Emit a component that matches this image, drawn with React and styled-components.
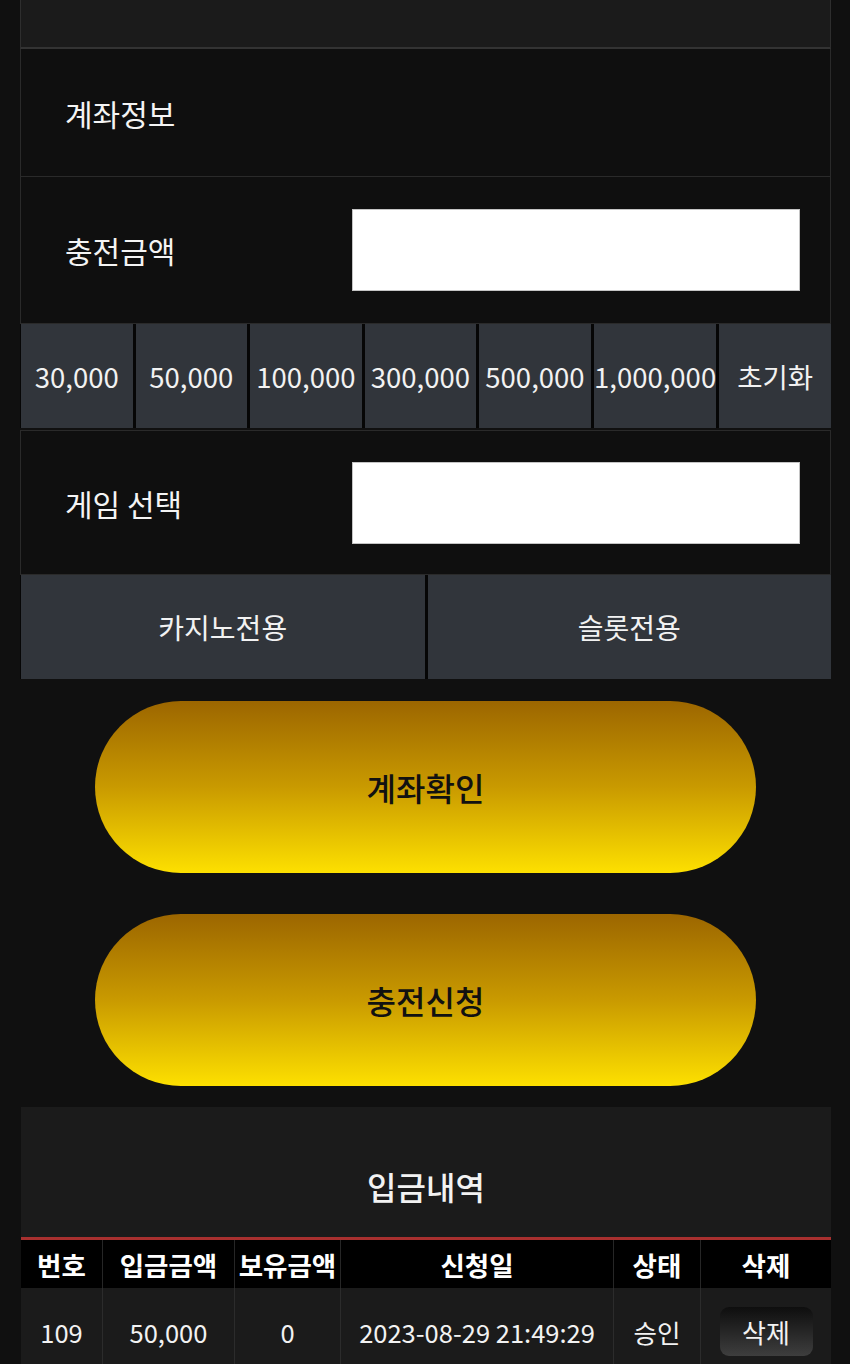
import React from 'react';
import styled, { createGlobalStyle } from 'styled-components';

const amounts = ['30,000', '50,000', '100,000', '300,000', '500,000', '1,000,000', '초기화'];

const history = [
  { no: 109, amount: '50,000', balance: '0', date: '2023-08-29 21:49:29', status: '승인' },
];

const App = () => {
  return (
    <>
      <GlobalStyle />
      <Page>
        <TopBar />
        <InfoRow $height={128}>
          <Label>계좌정보</Label>
        </InfoRow>
        <InfoRow $height={147}>
          <Label>충전금액</Label>
          <Field type='text' />
        </InfoRow>
        <AmountGrid>
          {amounts.map((a) => (
            <QuickButton key={a} $size={27.5}>
              {a}
            </QuickButton>
          ))}
        </AmountGrid>
        <InfoRow $height={145} $gapTop>
          <Label>게임 선택</Label>
          <Field type='text' />
        </InfoRow>
        <GameGrid>
          <QuickButton $size={28}>카지노전용</QuickButton>
          <QuickButton $size={28}>슬롯전용</QuickButton>
        </GameGrid>
        <Actions>
          <GoldButton>계좌확인</GoldButton>
          <GoldButton>충전신청</GoldButton>
        </Actions>
        <History>
          <HistoryTitle>입금내역</HistoryTitle>
          <HeadRow>
            <HeadCell>번호</HeadCell>
            <HeadCell>입금금액</HeadCell>
            <HeadCell>보유금액</HeadCell>
            <HeadCell>신청일</HeadCell>
            <HeadCell>상태</HeadCell>
            <HeadCell>삭제</HeadCell>
          </HeadRow>
          {history.map((h) => (
            <DataRow key={h.no}>
              <DataCell>{h.no}</DataCell>
              <DataCell>{h.amount}</DataCell>
              <DataCell>{h.balance}</DataCell>
              <DataCell>{h.date}</DataCell>
              <DataCell>{h.status}</DataCell>
              <DataCell>
                <DeleteButton>삭제</DeleteButton>
              </DataCell>
            </DataRow>
          ))}
        </History>
      </Page>
    </>
  );
};

export default App;

const GlobalStyle = createGlobalStyle`
  html, body {
    margin: 0;
    padding: 0;
    background: #101010;
  }
  body {
    font-family: "Noto Sans CJK KR", "Noto Sans", sans-serif;
    color: #f2f2f2;
  }
  * {
    box-sizing: border-box;
  }
`;

const Page = styled.div`
  margin: 0 19px 0 20px;
  display: flex;
  flex-direction: column;
  padding-bottom: 40px;
`;

const TopBar = styled.div`
  height: 49px;
  background: #1b1b1b;
  border-left: 1px solid #2e2e2e;
  border-right: 1px solid #2e2e2e;
  border-bottom: 2px solid #333;
`;

const InfoRow = styled.div`
  height: ${(p) => p.$height}px;
  margin-top: ${(p) => (p.$gapTop ? '2px' : '0')};
  background: #0f0f0f;
  border: 1px solid #2a2a2a;
  border-top: ${(p) => (p.$gapTop ? '1px solid #2a2a2a' : 'none')};
  display: flex;
  align-items: center;
  padding: 0 30px 0 44px;
`;

const Label = styled.div`
  width: 287px;
  font-size: 30px;
  line-height: 36px;
  color: #f4f4f4;
`;

const Field = styled.input`
  width: 448px;
  height: 82px;
  background: #fff;
  border: 1px solid #c4c4c4;
  outline: none;
  font-size: 24px;
  padding: 0 12px;
`;

const AmountGrid = styled.div`
  display: grid;
  grid-template-columns: 1fr 1fr 1fr 1fr 1fr 1.1fr 1fr;
  gap: 3px;
  height: 104px;
  padding-left: 1px;
  background: #060606;
`;

const GameGrid = styled.div`
  display: grid;
  grid-template-columns: 1fr 1fr;
  gap: 3px;
  height: 104px;
  padding-left: 1px;
  background: #060606;
`;

const QuickButton = styled.button`
  background: #31353b;
  border: none;
  color: #f2f2f2;
  font-family: inherit;
  font-size: ${(p) => p.$size}px;
  padding: 0;
  white-space: nowrap;
  overflow: visible;
  cursor: pointer;
`;

const Actions = styled.div`
  display: flex;
  flex-direction: column;
  align-items: center;
  gap: 41px;
  padding: 22px 0 21px;
`;

const GoldButton = styled.button`
  width: 661px;
  height: 172px;
  border: none;
  border-radius: 86px;
  background: linear-gradient(to bottom, #9c6600 0%, #c99a00 50%, #fde000 100%);
  color: #111;
  font-family: inherit;
  font-size: 32px;
  font-weight: 500;
  cursor: pointer;
`;

const History = styled.div`
  background: #1b1b1b;
  margin-left: 1px;
`;

const HistoryTitle = styled.div`
  text-align: center;
  font-size: 32px;
  line-height: 36px;
  font-weight: 500;
  padding: 61px 0 33px;
  border-bottom: 3px solid #a8302f;
`;

const columns = '82px 132px 106px 273px 87px 1fr';

const HeadRow = styled.div`
  display: grid;
  grid-template-columns: ${columns};
  background: #000;
  height: 48px;
`;

const HeadCell = styled.div`
  display: flex;
  align-items: center;
  justify-content: center;
  font-size: 26.5px;
  font-weight: 700;
  color: #fff;
  white-space: nowrap;
  border-right: 1px solid #262626;
  &:last-child {
    border-right: none;
  }
`;

const DataRow = styled.div`
  display: grid;
  grid-template-columns: ${columns};
  height: 90px;
  background: #1b1b1b;
`;

const DataCell = styled.div`
  display: flex;
  align-items: center;
  justify-content: center;
  padding-bottom: 2px;
  font-size: 25.5px;
  color: #f2f2f2;
  white-space: nowrap;
  border-right: 1px solid #2c2c2c;
  border-bottom: 1px solid #2c2c2c;
  &:last-child {
    border-right: none;
  }
`;

const DeleteButton = styled.button`
  width: 93px;
  height: 49px;
  border: none;
  border-radius: 9px;
  background: linear-gradient(to bottom, #0e0e0e, #3e3e3e);
  color: #f2f2f2;
  font-family: inherit;
  font-size: 26px;
  cursor: pointer;
`;
